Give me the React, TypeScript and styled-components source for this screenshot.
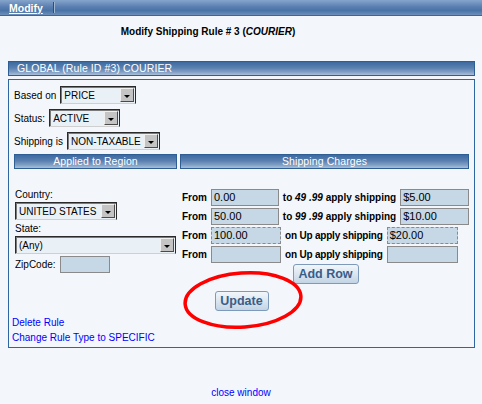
import React from "react";
import styled, { createGlobalStyle } from "styled-components";

const GlobalStyle = createGlobalStyle`
  body {
    margin: 0;
    background: #f3f7fb;
    font-family: "Liberation Sans", Arial, sans-serif;
    font-size: 10px;
    color: #000;
  }
`;

const TopBar = styled.div`
  height: 15px;
  border-bottom: 1px solid #3b6696;
  background: linear-gradient(#86a5cc, #5a7fb0 45%, #4a73a6 70%, #6d8fbb);
  display: flex;
  align-items: center;
  padding-left: 9px;
`;

const TabLink = styled.a`
  color: #fff;
  font-weight: bold;
  font-size: 10.5px;
  text-decoration: underline;
`;

const TabDivider = styled.span`
  width: 1px;
  height: 11px;
  margin-left: 10px;
  background: #2b4d7a;
  box-shadow: 1px 0 0 #9fb6d3;
`;

const Title = styled.div`
  margin: 9px 0 22px;
  padding-right: 66px;
  text-align: center;
  font-size: 10px;
  font-weight: bold;
  line-height: 14px;
`;

const Panel = styled.div`
  margin: 0 7px 0 8px;
`;

const BlueBar = styled.div<{ $center?: boolean }>`
  height: 15px;
  box-sizing: border-box;
  border: 1px solid #2f5e95;
  background: linear-gradient(#3c6aa0, #5a80b0 45%, #7e9dc3 75%, #a9bfda);
  color: #fff;
  font-size: 10.5px;
  letter-spacing: 0.1px;
  line-height: 13px;
  padding-left: ${(p) => (p.$center ? 0 : 8)}px;
  text-align: ${(p) => (p.$center ? "center" : "left")};
  white-space: nowrap;
`;

const Box = styled.div`
  margin-top: 3px;
  border: 1px solid #2f65a0;
  padding: 6px 5px 3px;
`;

const FieldRow = styled.div`
  display: flex;
  align-items: center;
  gap: 4px;
  height: 18px;
  margin-bottom: 5px;
`;

const SelectBox = styled.div<{ $w: number }>`
  width: ${(p) => p.$w}px;
  height: 18px;
  box-sizing: border-box;
  display: flex;
  align-items: center;
  padding-left: 3px;
  background: #eaf1f6;
  border: 1px solid #2a2a2a;
  border-bottom-color: #cfcfcf;
  box-shadow: inset 1px 1px 0 #7a7a7a;
  font-size: 10px;
  white-space: nowrap;
`;

const Arrow = styled.span`
  margin-left: auto;
  margin-right: 1px;
  width: 14px;
  height: 14px;
  box-sizing: border-box;
  background: #c4c4c4;
  border: 1px solid;
  border-color: #f0f0f0 #4a4a4a #4a4a4a #f0f0f0;
  display: flex;
  align-items: center;
  justify-content: center;
  &::after {
    content: "";
    margin-top: 3px;
    border-left: 3px solid transparent;
    border-right: 3px solid transparent;
    border-top: 3px solid #000;
  }
`;

const Columns = styled.div`
  display: grid;
  grid-template-columns: 163px 289px;
  column-gap: 3px;
  margin-top: -1px;
`;

const LeftCol = styled.div`
  padding-top: 20px;
  padding-left: 1px;
`;

const RightCol = styled.div`
  padding-top: 20px;
  padding-left: 2px;
`;

const Label = styled.div<{ $top?: number }>`
  line-height: 12px;
  margin-top: ${(p) => p.$top ?? 0}px;
`;

const StackSelect = styled.div<{ $top: number }>`
  margin-top: ${(p) => p.$top}px;
`;

const ZipRow = styled.div`
  display: flex;
  align-items: center;
  gap: 4px;
  margin-top: 2px;
`;

const TextInput = styled.div<{ $w: number; $dotted?: boolean }>`
  width: ${(p) => p.$w}px;
  height: 17px;
  box-sizing: border-box;
  background: #c6d7e6;
  border: 1px ${(p) => (p.$dotted ? "dashed" : "solid")} #8a8a8a;
  font-size: 11px;
  font-weight: normal;
  line-height: 15px;
  padding-left: 2px;
`;

const RateRow = styled.div`
  display: flex;
  align-items: center;
  gap: 4px;
  height: 17px;
  margin-bottom: 2px;
  font-weight: bold;
  white-space: nowrap;
`;

const Range = styled.span`
  font-style: italic;
`;

const UpText = styled.span`
  letter-spacing: -0.2px;
`;

const ButtonRow = styled.div<{ $top: number }>`
  display: flex;
  justify-content: center;
  margin-top: ${(p) => p.$top}px;
`;

const ActionButton = styled.button<{ $w: number }>`
  position: relative;
  width: ${(p) => p.$w}px;
  height: 20px;
  padding: 0;
  border: 1px solid #7d9abb;
  border-radius: 3px;
  background: linear-gradient(#f2f6fa, #dbe6f0 50%, #c3d4e5);
  color: #3a5d88;
  font-family: "Liberation Sans", Arial, sans-serif;
  font-weight: bold;
  font-size: 12.5px;
`;

const Highlight = styled.svg`
  position: absolute;
  left: -34px;
  top: -22px;
  pointer-events: none;
`;

const Links = styled.div`
  margin: 6px 0 0 -2px;
`;

const BlueLink = styled.a`
  display: block;
  color: #0000ff;
  text-decoration: none;
  line-height: 12px;
  & + & {
    margin-top: 3px;
  }
`;

const Footer = styled.div`
  margin-top: 39px;
  text-align: center;
  line-height: 12px;
`;

const Select = ({ w, value }: { w: number; value: string }) => (
  <SelectBox $w={w}>
    {value}
    <Arrow />
  </SelectBox>
);

const rates = [
  { from: "0.00", range: "49 .99", charge: "$5.00" },
  { from: "50.00", range: "99 .99", charge: "$10.00" },
  { from: "100.00", range: "", charge: "$20.00", dotted: true },
  { from: "", range: "", charge: "" },
];

const App = () => (
  <>
    <GlobalStyle />
    <TopBar>
      <TabLink>Modify</TabLink>
      <TabDivider />
    </TopBar>
    <Title>
      Modify Shipping Rule # 3 (<i>COURIER</i>)
    </Title>
    <Panel>
      <BlueBar>GLOBAL (Rule ID #3) COURIER</BlueBar>
      <Box>
        <FieldRow>
          Based on <Select w={76} value="PRICE" />
        </FieldRow>
        <FieldRow>
          Status: <Select w={71} value="ACTIVE" />
        </FieldRow>
        <FieldRow>
          Shipping is <Select w={93} value="NON-TAXABLE" />
        </FieldRow>
        <Columns>
          <BlueBar $center>Applied to Region</BlueBar>
          <BlueBar $center>Shipping Charges</BlueBar>
          <LeftCol>
            <Label>Country:</Label>
            <StackSelect $top={1}>
              <Select w={102} value="UNITED STATES" />
            </StackSelect>
            <Label $top={3}>State:</Label>
            <StackSelect $top={1}>
              <Select w={161} value="(Any)" />
            </StackSelect>
            <ZipRow>
              ZipCode: <TextInput $w={50} />
            </ZipRow>
          </LeftCol>
          <RightCol>
            {rates.map((r, i) => (
              <RateRow key={i}>
                From
                <TextInput $w={70} $dotted={r.dotted}>
                  {r.from}
                </TextInput>
                {r.range ? (
                  <span>
                    to <Range>{r.range}</Range> apply shipping
                  </span>
                ) : (
                  <UpText>on Up apply shipping</UpText>
                )}
                <TextInput $w={71} $dotted={r.dotted}>
                  {r.charge}
                </TextInput>
              </RateRow>
            ))}
            <ButtonRow $top={-1}>
              <ActionButton $w={66}>Add Row</ActionButton>
            </ButtonRow>
          </RightCol>
        </Columns>
        <ButtonRow $top={7}>
          <ActionButton $w={54}>
            Update
            <Highlight width="122" height="60" viewBox="0 0 122 60">
              <ellipse
                cx="61"
                cy="30"
                rx="58"
                ry="27"
                fill="none"
                stroke="#ff0000"
                strokeWidth="3.5"
                transform="rotate(-4 61 30)"
              />
            </Highlight>
          </ActionButton>
        </ButtonRow>
        <Links>
          <BlueLink>Delete Rule</BlueLink>
          <BlueLink>Change Rule Type to SPECIFIC</BlueLink>
        </Links>
      </Box>
    </Panel>
    <Footer>
      <BlueLink>close window</BlueLink>
    </Footer>
  </>
);

export default App;
